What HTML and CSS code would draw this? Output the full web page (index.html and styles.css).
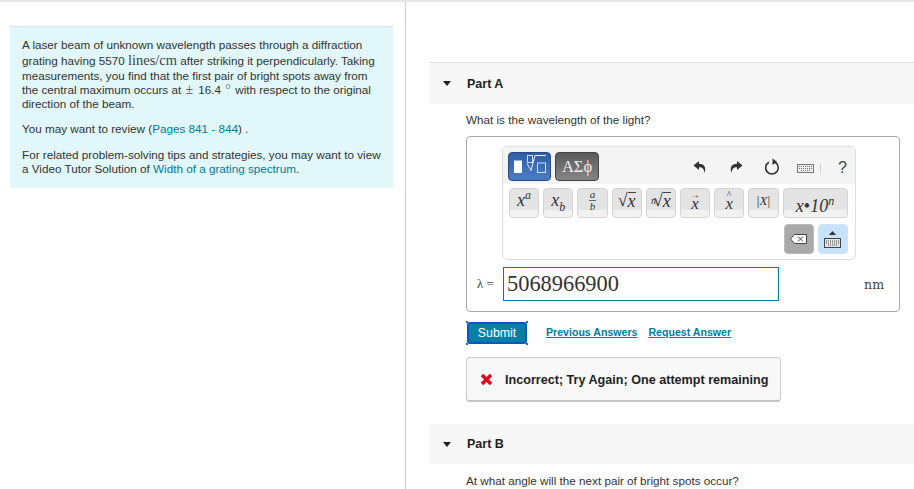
FILE: index.html
```html
<!DOCTYPE html>
<html lang="en">
<head>
  <meta charset="UTF-8">
  <meta name="viewport" content="width=device-width, initial-scale=1.0">
  <title>Diffraction grating</title>
  <link rel="stylesheet" href="styles.css">
</head>
<body>

<div class="page">
  <div class="left">
    <div class="intro">
      <p>A laser beam of unknown wavelength passes through a diffraction grating having 5570 <span class="math">lines/cm</span> after striking it perpendicularly. Taking measurements, you find that the first pair of bright spots away from the central maximum occurs at <span class="pm">±</span> 16.4 <span class="deg">°</span> with respect to the original direction of the beam.</p>
      <p class="review">You may want to review (<a href="#">Pages 841 - 844</a>) .</p>
      <p>For related problem-solving tips and strategies, you may want to view a Video Tutor Solution of <a href="#">Width of a grating spectrum</a>.</p>
    </div>
  </div>

  <div class="right">
    <div class="part-head part-a"><span class="caret"></span>Part A</div>
    <div class="part-body">
      <div class="question">What is the wavelength of the light?</div>

      <div class="answer-box">
        <div class="editor">
          <div class="toolbar">
            <div class="tab tab-blue">
              <svg width="37" height="24" viewBox="0 0 37 24">
                <rect x="3" y="5.500" width="8" height="12.500" fill="#fff"/>
                <rect x="16.500" y="0.500" width="5" height="7" fill="none" stroke="#cfe0f5"/>
                <path d="M16 8.500l4 7 4-15h11" fill="none" stroke="#e8f0fa"/>
                <rect x="26.500" y="8" width="8" height="9.500" fill="none" stroke="#cfe0f5"/>
              </svg>
            </div>
            <div class="tab tab-grey">ΑΣϕ</div>
            <div class="tools">
              <svg class="undo" width="14" height="14" viewBox="0 0 14 14"><path d="M6 1L0.500 5.500 6 10V7.200C9 7 11 8.500 11.500 13 13.500 8 11.500 3.800 6 3.800z" fill="#333"/></svg>
              <svg class="redo" width="14" height="14" viewBox="0 0 14 14"><path d="M8 1l5.500 4.500L8 10V7.200C5 7 3 8.500 2.500 13 .5 8 2.500 3.800 8 3.800z" fill="#333"/></svg>
              <svg class="reset" width="16" height="17" viewBox="0 0 16 17"><path d="M5 4.200A6.300 6.300 0 1 0 10.500 4" fill="none" stroke="#333" stroke-width="1.600"/><path d="M8.500 0.500v6.500l4.500-3.300z" fill="#333"/></svg>
              <svg class="kbd" width="17" height="9" viewBox="0 0 17 9"><rect x="0.500" y="0.500" width="16" height="8" fill="#eee" stroke="#777"/><path d="M2 2.500h13M2 4.500h13M4 6.500h9" stroke="#777" stroke-dasharray="1 1"/></svg>
              <span class="sep"></span>
              <span class="help">?</span>
            </div>
          </div>
          <div class="keys">
            <div class="key-row">
              <span class="key"><i>x<sup>a</sup></i></span>
              <span class="key"><i>x<sub>b</sub></i></span>
              <span class="key frac"><i class="num">a</i><i>b</i></span>
              <span class="key">√<i class="over">x</i></span>
              <span class="key"><sup class="root"><i>n</i></sup>√<i class="over">x</i></span>
              <span class="key accent"><span class="mark">→</span><i>x</i></span>
              <span class="key accent"><span class="mark">^</span><i>x</i></span>
              <span class="key small">|<i>X</i>|</span>
              <span class="key wide"><i>x</i>•<i>10<sup>n</sup></i></span>
            </div>
            <div class="key-row end">
              <span class="key del">
                <svg width="17" height="10" viewBox="0 0 17 10"><path d="M4.500 0.500H16.500V9.500H4.500L0.500 5z" fill="#fff" stroke="#444"/><path d="M8 2.500l5 5M13 2.500l-5 5" stroke="#444"/></svg>
              </span>
              <span class="key kb">
                <svg width="17" height="18" viewBox="0 0 17 18"><path d="M5 5l3.500-4L12 5z" fill="#333"/><rect x="0.500" y="8.500" width="16" height="9" fill="#e4e4e4" stroke="#444"/><path d="M2 11h13M2 13h13M4 15h9" stroke="#555" stroke-dasharray="1 1"/></svg>
              </span>
            </div>
          </div>
        </div>
        <div class="input-row">
          <span class="lambda">λ =</span>
          <div class="input">5068966900</div>
          <span class="unit">nm</span>
        </div>
      </div>

      <div class="actions">
        <button class="submit">Submit</button>
        <a href="#">Previous Answers</a>
        <a href="#">Request Answer</a>
      </div>

      <div class="feedback">
        <svg width="13" height="13" viewBox="0 0 13 13"><path d="M2 2l9 9M11 2l-9 9" stroke="#e8001c" stroke-width="3.400"/></svg>
        Incorrect; Try Again; One attempt remaining
      </div>
    </div>

    <div class="part-head part-b"><span class="caret"></span>Part B</div>
    <div class="part-body">
      <div class="question">At what angle will the next pair of bright spots occur?</div>
    </div>
  </div>
</div>

</body>
</html>
```

FILE: styles.css
```css
body {
  margin: 0;
  height: 489px;
  overflow: hidden;
  background: #fff;
  color: #333;
  font-family: 'Liberation Sans', Arial, sans-serif;
  font-size: 11.7px;
}

a {
  color: #007c9e;
  text-decoration: none;
}

.page {
  display: flex;
  height: 487px;
  border-top: 2px solid #e4e6ea;
}

.left {
  width: 406px;
  flex: none;
  box-sizing: border-box;
  padding: 24px 12px 0 10px;
  border-right: 1px solid #c5d3e3;
}

.intro {
  background: #e1f7f9;
  border-top: 1px solid #d8e2e6;
  padding: 11px 12px 12px 12px;
  height: 162px;
  box-sizing: border-box;
  line-height: 14px;
}

.intro p {
  margin: 0 0 11px;
}

.intro .review {
  margin-bottom: 12px;
}

.math {
  font-family: 'Liberation Serif', serif;
  font-size: 14.5px;
  line-height: 17px;
  color: #444;
}

.pm {
  margin: 0 2px 0 1px;
  font-family: 'Liberation Serif', serif;
  font-size: 14px;
  color: #555;
}

.deg {
  margin: 0 1px;
  font-family: 'Liberation Serif', serif;
  font-size: 14px;
  color: #777;
}

.right {
  flex: 1;
  padding: 60px 0 0 23px;
  min-width: 0;
}

.part-head {
  display: flex;
  align-items: center;
  height: 41px;
  background: #f7f7f7;
  font-size: 12.500px;
  font-weight: bold;
  color: #222;
}

.part-a {
  border-top: 1px solid #e2e4e6;
}

.caret {
  width: 0;
  height: 0;
  margin: 0 16px 0 14px;
  border-left: 4.500px solid transparent;
  border-right: 4.500px solid transparent;
  border-top: 5px solid #222;
}

.part-body {
  padding: 0 14px 0 37px;
}

.question {
  padding-top: 9px;
  line-height: 14px;
}

.answer-box {
  margin-top: 9px;
  height: 176px;
  box-sizing: border-box;
  padding: 9px 0 0 35px;
  border: 1px solid #aaa;
  border-radius: 4px;
}

.editor {
  width: 354px;
  height: 114px;
  box-sizing: border-box;
  border: 1px solid #ddd;
  border-radius: 5px;
}

.toolbar {
  display: flex;
  height: 37px;
  box-sizing: border-box;
  padding: 5px 5px 0;
  gap: 4px;
  background: #f4f4f4;
  border-radius: 5px 5px 0 0;
}

.tab {
  width: 43px;
  height: 29px;
  box-sizing: border-box;
  display: flex;
  align-items: center;
  justify-content: center;
  border-radius: 4px;
  border: 1px solid #2b4a7a;
}

.tab-blue {
  background: linear-gradient(#2f5ea8, #4a7cc4);
}

.tab-grey {
  width: 44px;
  background: linear-gradient(#5a5a5a, #858585);
  border-color: #444;
  color: #eee;
  font-family: 'Liberation Serif', serif;
  font-size: 16.500px;
}

.tools {
  flex: 1;
  display: flex;
  align-items: center;
  height: 29px;
  padding-left: 90px;
}

.undo { margin-right: 22px; }
.redo { margin-right: 21px; }
.reset { margin-right: 17px; }

.kbd {
  margin-top: 3px;
}

.sep {
  width: 1px;
  height: 9px;
  margin: 3px 0 0 6px;
  background: #ccc;
}

.help {
  margin: 2px 0 0 17px;
  font-size: 16px;
  color: #444;
}

.keys {
  padding: 4px 7px 0 6px;
}

.key-row {
  display: flex;
  gap: 4px;
}

.key-row.end {
  justify-content: flex-end;
  margin-top: 6px;
}

.key {
  display: flex;
  align-items: center;
  justify-content: center;
  width: 30.200px;
  height: 30px;
  box-sizing: border-box;
  padding-bottom: 5px;
  border: 1px solid #d4d4d4;
  border-radius: 4px;
  background: linear-gradient(#e4e4e4 0, #e4e4e4 21px, #f2f2f2 21px);
  font-family: 'Liberation Serif', serif;
  font-size: 18px;
  color: #333;
  white-space: nowrap;
}

.key sup,
.key sub {
  font-size: 12px;
  line-height: 0;
}

.frac {
  flex-direction: column;
  font-size: 11px;
  line-height: 11px;
}

.frac .num {
  border-bottom: 1px solid #666;
  padding: 0 1px;
}

.over {
  border-top: 1px solid #444;
  line-height: 17px;
}

.root {
  margin-right: -3px;
}

.root i {
  font-size: 10px;
}

.accent {
  flex-direction: column;
  line-height: 12px;
  font-size: 17px;
}

.mark {
  font-size: 10px;
  line-height: 6px;
}

.small {
  font-size: 13px;
}

.wide {
  width: 65px;
  font-size: 18px;
  padding-top: 6px;
  padding-bottom: 0;
}

.del {
  background: #a9a9a9;
  border-color: #bbb;
  padding: 0;
}

.kb {
  background: #c6e3fb;
  border-color: #cfe4f5;
  padding: 0;
}

.input-row {
  display: flex;
  align-items: center;
  margin-top: 7px;
  margin-left: -25px;
}

.lambda {
  width: 26px;
  flex: none;
  font-family: 'Liberation Serif', serif;
  font-size: 13px;
  color: #444;
}

.input {
  width: 276px;
  height: 34px;
  box-sizing: border-box;
  padding-left: 3px;
  border: 1px solid #007b9a;
  font-family: 'Liberation Serif', serif;
  font-size: 22.400px;
  line-height: 32px;
}

.unit {
  margin-left: auto;
  margin-right: 15px;
  font-family: 'DejaVu Serif', serif;
  font-size: 12.500px;
  color: #444;
}

.actions {
  display: flex;
  align-items: center;
  gap: 11px;
  margin-top: 10px;
  height: 22px;
}

.actions a {
  padding-bottom: 2px;
  font-size: 10.600px;
  font-weight: bold;
  text-decoration: underline;
}

.submit {
  position: relative;
  width: 60px;
  height: 22px;
  margin: 0 8px 0 1px;
  padding: 0;
  border: 2px solid #0358c8;
  border-radius: 3px;
  background: #0a7fa6;
  color: #fff;
  font-family: inherit;
  font-size: 12.300px;
}

/* focus corner ticks */
.submit::before {
  content: "";
  position: absolute;
  inset: -3px;
  background:
    linear-gradient(#0a7fa6, #0a7fa6) left top / 2px 2px no-repeat,
    linear-gradient(#0a7fa6, #0a7fa6) right top / 2px 2px no-repeat,
    linear-gradient(#0a7fa6, #0a7fa6) left bottom / 2px 2px no-repeat,
    linear-gradient(#0a7fa6, #0a7fa6) right bottom / 2px 2px no-repeat;
}

.feedback {
  display: flex;
  align-items: center;
  gap: 12px;
  width: 315px;
  height: 45px;
  box-sizing: border-box;
  margin-top: 13px;
  padding: 1px 0 0 13px;
  border: 1px solid #ccc;
  border-bottom: 2px solid #c4c4c4;
  border-radius: 4px;
  background: #f8f8f8;
  font-size: 12.600px;
  font-weight: bold;
  color: #222;
}

.part-b {
  height: 40px;
  margin-top: 22px;
}

.part-b + .part-body .question {
  padding-top: 10px;
}
```
